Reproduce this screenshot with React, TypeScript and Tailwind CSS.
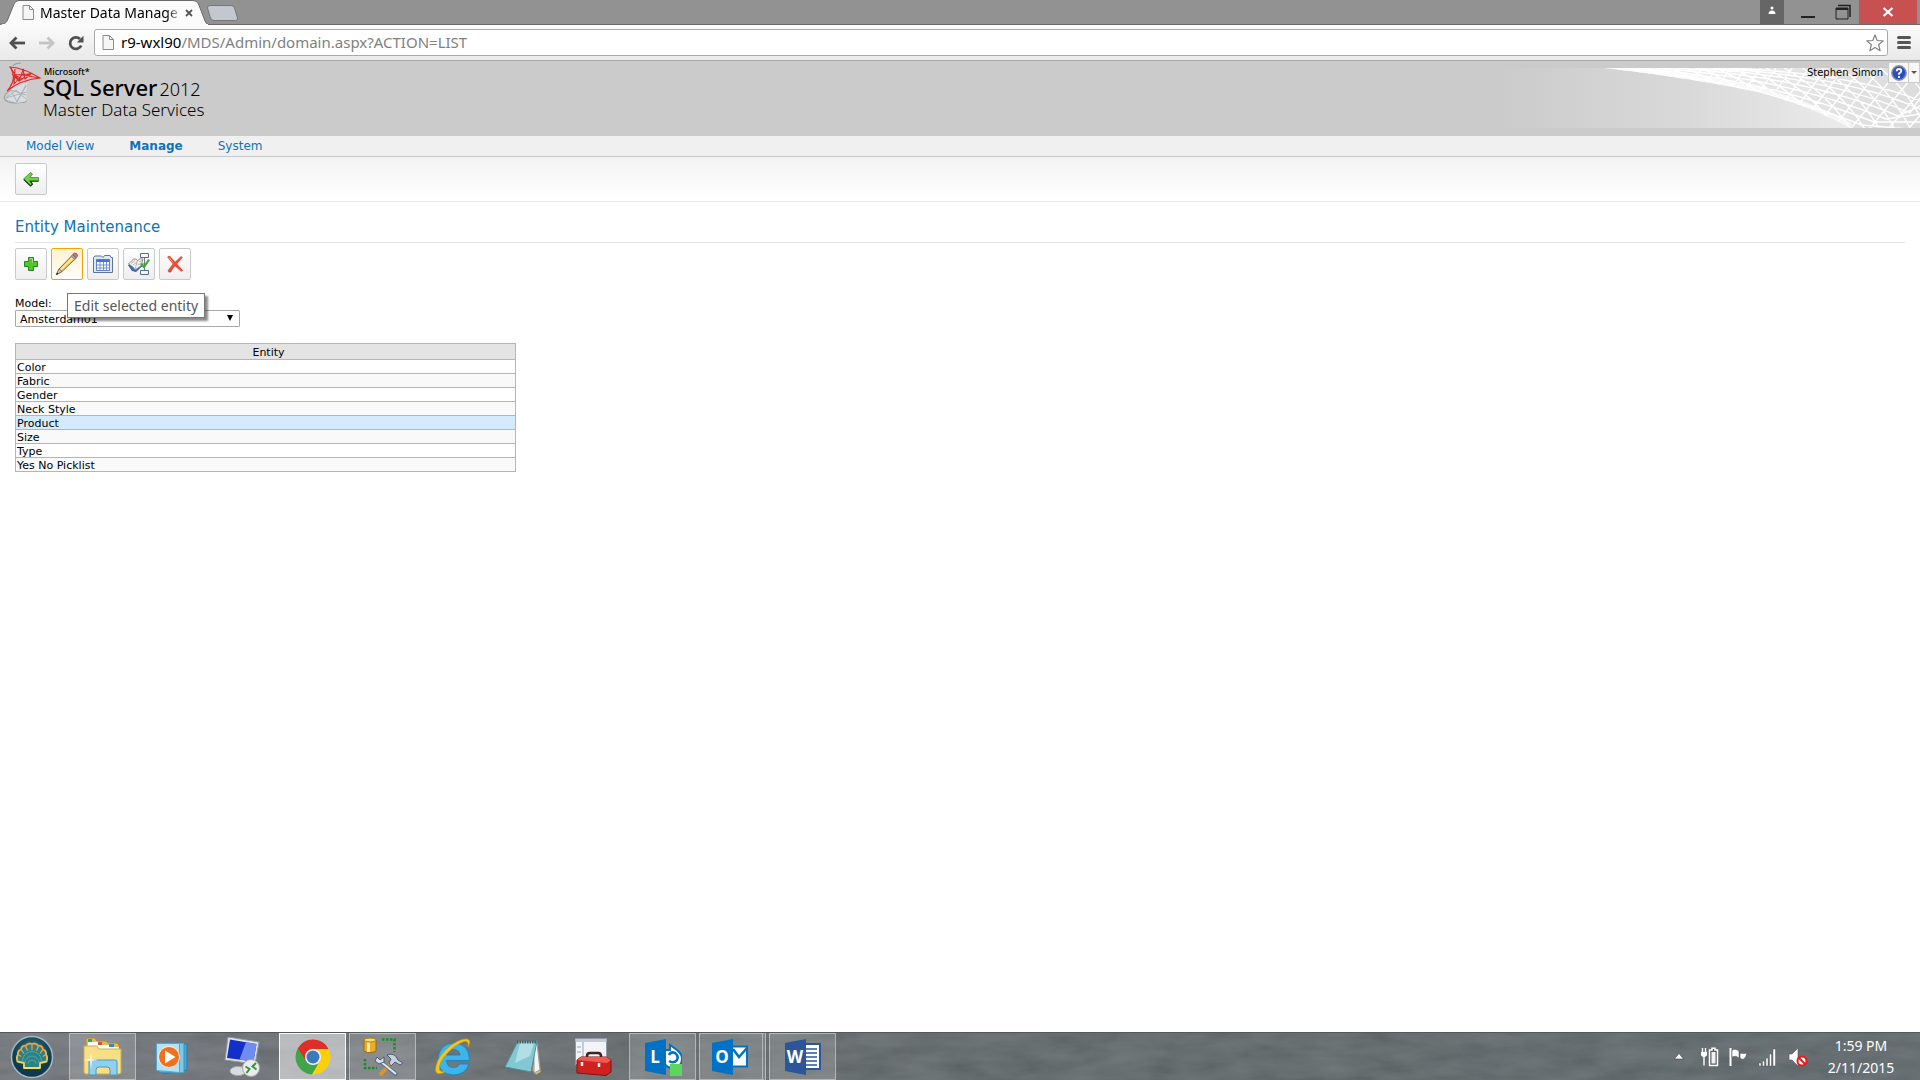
import React from 'react';
import { HiUser } from 'react-icons/hi';

const NAV = [
  { name: 'Model View', active: false },
  { name: 'Manage', active: true },
  { name: 'System', active: false },
];

const ENTITIES = [
  'Color',
  'Fabric',
  'Gender',
  'Neck Style',
  'Product',
  'Size',
  'Type',
  'Yes No Picklist',
];

/* ---------- browser icons ---------- */

function PageIcon({ className }: { className?: string }) {
  return (
    <svg viewBox="0 0 12 15" className={className}>
      <path d="M1 .5h6.5l4 4v10H1z" fill="#f6f6f6" stroke="#8c8c8c" />
      <path d="M7.5.5v4h4" fill="none" stroke="#8c8c8c" />
    </svg>
  );
}

function NavArrow({ color, flip }: { color: string; flip?: boolean }) {
  return (
    <svg viewBox="0 0 16 14" className="w-4 h-[14px]">
      <g transform={flip ? 'translate(16 0) scale(-1 1)' : undefined} fill="none" stroke={color} strokeWidth="2.8">
        <path d="M7.5 1.5 2 7l5.5 5.5" />
        <path d="M2 7h14" />
      </g>
    </svg>
  );
}

function ReloadIcon() {
  return (
    <svg viewBox="0 0 16 16" className="w-4 h-4">
      <path d="M13.2 10.500A5.800 5.800 0 1 1 12 4" fill="none" stroke="#505050" strokeWidth="2.8" />
      <path d="M15.5.8V7.500H8.800z" fill="#505050" />
    </svg>
  );
}

function BrowserTabs() {
  return (
    <div className="flex h-[25px] bg-[#929292] border-b border-[#6a6a6a] justify-between">
      <div className="flex">
        <div className="relative w-[210px] h-[25px]">
          <svg viewBox="0 0 210 25" className="absolute inset-0 w-[210px] h-[25px]">
            <path d="M0 25V24c5 0 6-1 7.500-4L14 4q1.500-3.500 5-3.500h174q4 0 5.500 3.500l6.500 17q1.500 4 5 4z" fill="#fbfbfb" stroke="#6a6a6a" />
            <path d="M2 25h206" stroke="#fbfbfb" strokeWidth="2" />
          </svg>
          <div className="relative flex items-center h-[25px] pl-[22px]">
            <PageIcon className="w-3 h-[15px] shrink-0" />
            <span className="ml-1.5 w-[139px] whitespace-nowrap text-[14px] bg-linear-to-r from-black from-90% to-[#ccc] bg-clip-text text-transparent">
              Master Data Manage
            </span>
            <button aria-label="Close tab" className="ml-1.5">
              <svg viewBox="0 0 8 8" className="w-2 h-2">
                <path d="M1 1l6 6M7 1 1 7" stroke="#555" strokeWidth="1.800" />
              </svg>
            </button>
          </div>
        </div>
        <button aria-label="New tab" className="self-start mt-[5px] -ml-1">
          <svg viewBox="0 0 32 16" className="w-8 h-4">
            <path d="M1.500 3Q1 .5 4 .5h21q2.500 0 3.500 2.500l3 10q.5 2.500-2 2.500H8q-2.500 0-3.500-2.500z" fill="#c3c8d0" stroke="#777" />
          </svg>
        </button>
      </div>
      <div className="flex h-6">
        <button aria-label="Profile" className="w-6 bg-[#666] flex items-center justify-center pb-1">
          <HiUser className="w-[10px] h-[10px] text-white" />
        </button>
        <button aria-label="Minimize" className="w-12 flex items-end justify-center pb-1.5">
          <span className="w-[14px] h-0.5 bg-[#222]" />
        </button>
        <button aria-label="Restore" className="w-[27px] flex items-center justify-start pl-[3px]">
          <svg viewBox="0 0 16 16" className="w-4 h-4">
            <path d="M1 4h12v11H1z" fill="none" stroke="#222" />
            <path d="M1 5h12" stroke="#222" strokeWidth="2" />
            <path d="M3 1.500h12V13" fill="none" stroke="#222" strokeWidth="1.500" />
          </svg>
        </button>
        <button aria-label="Close" className="w-[58px] bg-[#c75050] flex items-center justify-center mr-[3px]">
          <svg viewBox="0 0 12 10" className="w-3 h-[10px]">
            <path d="M1.500 1l9 8M10.500 1l-9 8" stroke="#fff" strokeWidth="2.200" />
          </svg>
        </button>
      </div>
    </div>
  );
}

function AddressBar() {
  return (
    <div className="flex items-center h-9 bg-linear-to-b from-[#fbfbfb] to-[#e9e9e9] border-b border-[#a8a8a8] pl-[9px]">
      <button aria-label="Back"><NavArrow color="#505050" /></button>
      <button aria-label="Forward" className="ml-[14px]"><NavArrow color="#c4c4c4" flip /></button>
      <button aria-label="Reload" className="ml-[13px]"><ReloadIcon /></button>
      <div className="ml-[10px] flex flex-1 items-center h-[27px] bg-white border border-[#a9a9a9] rounded-[3px] pl-[7px] pr-[3px]">
        <PageIcon className="w-3 h-[15px] shrink-0" />
        <div className="ml-[7px] pb-0.5 flex-1 text-[15px] leading-5 whitespace-nowrap text-[#808080]">
          <span className="text-black">r9-wxl90</span>/MDS/Admin/domain.aspx?ACTION=LIST
        </div>
        <button aria-label="Bookmark">
          <svg viewBox="0 0 18 18" className="w-[18px] h-[18px]">
            <path d="M9 1l2.200 5.500 6 .4-4.600 3.800 1.500 6L9 13.500l-5.100 3.200 1.500-6L.8 6.900l6-.4z" fill="#fff" stroke="#808080" strokeWidth="1.200" strokeLinejoin="round" />
          </svg>
        </button>
      </div>
      <button aria-label="Menu" className="mx-[9px] flex flex-col gap-0.5">
        <span className="w-[14px] h-[3px] rounded-sm bg-[#555]" />
        <span className="w-[14px] h-[3px] rounded-sm bg-[#555]" />
        <span className="w-[14px] h-[3px] rounded-sm bg-[#555]" />
      </button>
    </div>
  );
}

/* ---------- page header ---------- */

function SqlMark() {
  return (
    <svg viewBox="0 0 40 42" className="w-10 h-[42px]">
      <path d="M10 4q2-3 8-3M8 28Q2 31 1 36q2 5 12 5l10-1M24 17q-5 8-1 23" fill="none" stroke="#9aa0a8" strokeWidth="1.200" />
      <path d="M9 27 24 20l-1 19-9 2-11-4z" fill="#d9dce0" />
      <path d="M8 28l6 12 9-17M3 36l10-8 10 9M8 28l15 5M3 36l20-6M13 41l10-17" fill="none" stroke="#a5abb3" strokeWidth=".8" />
      <path d="M7 5q14 1 30 11-20 2-33 13 11-12 3-24z" fill="#eebcbc" />
      <path d="M7 5q14 1 30 11-20 2-33 13 11-12 3-24z M8 6l8 13 4-11 2 9 6-5-17 1 9 4M9 12l7 7M12 7l-1 15 8-9 18 3M28 11l-12 8M7 25l6-12" fill="none" stroke="#dd2a2c" strokeWidth="1.100" />
    </svg>
  );
}

/* Mesh that fades in on the right end of the banner */
function BannerMesh() {
  const lines: string[] = [];
  // diagonals get steeper and further apart towards the right edge
  for (let i = 0; i < 26; i++) {
    const x = 60 + i * 10 + i * i * 0.25;
    const lean = 130 - i * 4;
    lines.push(`M${x} 0Q${x + lean * 0.6} 22 ${x + lean} 60`);
    lines.push(`M${x + 60} 0L${x + 30 - i} 60`);
  }
  for (let i = 1; i < 8; i++) {
    lines.push(`M${105 + i * 18} 0Q${230 + i * 20} ${14 - i} ${350 + i * 12} ${60 - i * 3}L420 ${70 - i * 8}`);
  }
  return (
    <svg viewBox="0 0 420 60" className="w-[420px] h-[60px]">
      <defs>
        <linearGradient id="banner" x1="0" x2="1">
          <stop offset="0" stopColor="#cbcbcb" />
          <stop offset=".45" stopColor="#d9d9d9" />
          <stop offset=".85" stopColor="#ececec" />
        </linearGradient>
        <linearGradient id="edge" x1="0" x2="1">
          <stop offset="0" stopColor="#f2f2f2" />
          <stop offset="1" stopColor="#dcdcdc" />
        </linearGradient>
        <clipPath id="sweep">
          <path d="M105 0Q185 9 258 24 310 38 350 60H420V0z" />
        </clipPath>
      </defs>
      <path d="M0 0h420v60H0z" fill="url(#banner)" />
      <g clipPath="url(#sweep)">
        <path d="M100 0h320v60H100z" fill="url(#edge)" />
        <path d={lines.join('')} fill="none" stroke="#fff" strokeWidth="1.400" />
        <path d="M105 0Q185 9 258 24 310 38 350 60" fill="none" stroke="#fff" strokeWidth="10" opacity=".7" />
      </g>
    </svg>
  );
}

function Banner() {
  return (
    <header className="flex justify-between h-[75px] bg-[#cbcbcb]">
      <div className="flex pl-[3px] pt-px">
        <SqlMark />
        <div className="text-black">
          <div className="text-[9px] leading-[10px] mt-[5px] ml-px font-medium">Microsoft*</div>
          <div className="flex items-baseline whitespace-nowrap">
            <span className="text-[22px] leading-5 font-medium">SQL Server</span>
            <span className="text-[18px] leading-5 font-light ml-0.5">2012</span>
          </div>
          <div className="text-[17px] leading-[22px] font-light whitespace-nowrap">Master Data Services</div>
        </div>
      </div>
      <div className="relative pt-[7px]">
        <BannerMesh />
        <div className="absolute top-px right-0 flex items-center font-['DejaVu_Sans',sans-serif] text-[10px] text-black">
          <span className="mr-[5px]">Stephen Simon</span>
          <button aria-label="Help" className="w-[21px] h-[21px] bg-[#f8f8f8] border border-[#ccc] flex items-center justify-center">
            <svg viewBox="0 0 16 16" className="w-4 h-4">
              <circle cx="8" cy="8" r="7.200" fill="#2a50c0" stroke="#8c95a8" strokeWidth="1.500" />
              <path d="M5.700 6.200Q5.700 4 8 4t2.300 2Q10.300 7.300 8 8.500v1.300M8 11v2" fill="none" stroke="#fff" strokeWidth="1.800" />
            </svg>
          </button>
          <button aria-label="Help options" className="w-[11px] h-[21px] bg-[#f8f8f8] border border-l-0 border-[#ccc] flex items-center justify-center">
            <span className="border-x-[3px] border-x-transparent border-t-[3px] border-t-[#555]" />
          </button>
        </div>
      </div>
    </header>
  );
}

/* ---------- toolbar ---------- */

function ToolButton({ label, active, children }: { label: string; active?: boolean; children: React.ReactNode }) {
  return (
    <button
      aria-label={label}
      className={`w-8 h-8 border rounded-[2px] flex items-center justify-center ${
        active ? 'border-[#f0a30a] bg-linear-to-b from-[#fff3d0] to-[#fffdf8]' : 'border-[#c9c9c9] bg-linear-to-b from-white to-[#eee]'
      }`}>
      {children}
    </button>
  );
}

const BackIcon = () => (
  <svg viewBox="0 0 16 16" className="w-4 h-4">
    <path d="M.5 8 7.500 1.500l2 1.500-2.500 3.500h8.500V10H7l2.500 3-1.500 2z" fill="#6fd048" stroke="#3c7a28" strokeWidth=".7" />
    <path d="M.8 8.500 7.500 15l2-1.800L7.300 10.200h8.200" fill="none" stroke="#1c3814" strokeWidth="1.100" />
  </svg>
);

const AddIcon = () => (
  <svg viewBox="0 0 16 16" className="w-4 h-4">
    <path d="M5.500 1.500h5v4h4v5h-4v4h-5v-4h-4v-5h4z" fill="#55c52c" stroke="#22851a" strokeLinejoin="round" />
    <path d="M6.500 2.500h3v4" fill="none" stroke="#a5e486" />
  </svg>
);

const PencilIcon = () => (
  <svg viewBox="0 0 24 24" className="w-6 h-6">
    <path d="M1.500 22.500 4 17 17.500 3l3.500 3.200L7 19.500z" fill="#f3cb63" stroke="#7b5a2c" strokeWidth=".9" />
    <path d="M6 17.500 19 4.500" stroke="#fff0ae" strokeWidth="1.200" />
    <path d="M1.500 22.500 4 17l3 2.500z" fill="#ead0b0" stroke="#6a4b33" strokeWidth=".7" />
    <path d="M1 23l1-2.500L3.500 22z" fill="#333" />
    <path d="M16.200 4.200l3.500 3.300 1.500-1.500-3.500-3.300z" fill="#9ba6b5" stroke="#66707c" strokeWidth=".6" />
    <path d="M17.800 2.400 19.300 1q3-.3 3.300 2.800L21.300 5.800z" fill="#d8707a" stroke="#8f3b48" strokeWidth=".7" />
  </svg>
);

const EntityIcon = () => (
  <svg viewBox="0 0 22 20" className="w-[22px] h-5">
    <path d="M1.500 3.500 3 2h6.500L11 3.500 12.500 1.500H18L19 3.500h1.500v15h-19z" fill="#dde6f2" stroke="#5f7597" />
    <path d="M4.500 5.500h13v11h-13z" fill="#fff" stroke="#3c66b0" strokeWidth=".8" />
    <path d="M4.500 5.500h13v2.500h-13z" fill="#3e75d6" />
    <path d="M4.500 11h13M4.500 14h13M8 8v8.500M11.500 8v8.500M14.500 8v8.500" stroke="#6f94d2" />
  </svg>
);

const HierarchyIcon = () => (
  <svg viewBox="0 0 24 24" className="w-6 h-6">
    <path d="M17.500 5v15M14 12h3.500" stroke="#777" />
    <path d="M13.500 1.500h8v4h-8zM13.500 18.500h8v4h-8z" fill="#f6f9ff" stroke="#526c9d" />
    <path d="M1.500 13 5 18.500l4 1 7-6.500-8-2z" fill="#3f6ec2" stroke="#294c8c" strokeWidth=".8" />
    <path d="M1.500 12 6.500 7q3-.5 4 1.500Q12.500 6 16 7l-2 7-6 4q-1-3-6.500-6z" fill="#f4f4ee" stroke="#777" strokeWidth=".8" />
    <path d="M10.500 8.500 8 17.500M4 11.500l4-3M6 13l4-3M12 10l3-1.500M11 13l3.500-2" stroke="#999" strokeWidth=".7" />
    <path d="M14 12l3 3 5-7.500" fill="none" stroke="#3aa83a" strokeWidth="2.200" />
  </svg>
);

const DeleteIcon = () => (
  <svg viewBox="0 0 18 18" className="w-[18px] h-[18px]">
    <path d="M1.500 2Q3.500 0 5 2.500L9.200 7 15 1.500l1.500.8L10.800 9l6 6.500-1.500 1L9 11q-3 3-4 6-3 1-3-1.500L7 9z" fill="#ef4a32" stroke="#c9301f" strokeWidth=".4" />
    <path d="M3 2.500l4 5" stroke="#ff9c85" />
  </svg>
);

/* ---------- taskbar icons ---------- */

const StartIcon = () => (
  <svg viewBox="0 0 44 44" className="w-11 h-11">
    <defs>
      <radialGradient id="start" cx=".5" cy=".35">
        <stop offset="0" stopColor="#2f7783" />
        <stop offset="1" stopColor="#10394d" />
      </radialGradient>
      <linearGradient id="shell" x1="0" x2="0" y1="0" y2="1">
        <stop offset="0" stopColor="#f59a3c" />
        <stop offset="1" stopColor="#f6e04e" />
      </linearGradient>
    </defs>
    <circle cx="22" cy="22" r="20.500" fill="url(#start)" stroke="#a4bcc6" strokeWidth="1.500" />
    <path
      d="M14 33h16v-5l6.500-1.500Q38 22 36 19.500q.5-4-3-5-.5-4-4.500-3.800Q26 7.500 22 9q-4-1.500-6.500 1.700-4-.2-4.500 3.800-3.500 1-3 5-2 2.500-.5 7L14 28z"
      fill="#2c8288" stroke="url(#shell)" strokeWidth="1.800" strokeLinejoin="round" />
    <path d="M8 19.500l3 2M11 14.500l3 4M15.500 10.700l2 5M22 9v6M28.500 10.700l-2 5M33 14.500l-3 4M36 19.500l-3 2" stroke="#f0a245" strokeWidth="1.200" />
    <g fill="none" stroke="#66b3b0" strokeWidth=".7">
      <path d="M18 29a4 4 0 0 1 8 0M15 28a7 7 0 0 1 14 0M12.500 26a9.500 9.500 0 0 1 19 0" />
    </g>
  </svg>
);

const ExplorerIcon = () => (
  <svg viewBox="0 0 40 40" className="w-10 h-10">
    <path d="M3 3q0-2 2-2h7l2 3h9l2 2h9l2 2v5H3z" fill="#e2bd57" stroke="#af893a" />
    <path d="M5 5h12v7H5zM15 8h12v6H15zM25 10h11v4H25z" fill="#fff" />
    <path d="M5 2h4v3H5z" fill="#35a854" /><path d="M15 5h4v3h-4z" fill="#e14b3c" /><path d="M26 7h5v3h-5z" fill="#2e86d8" />
    <path d="M1 9h13l2 3h22v23q0 2-2 2H3q-2 0-2-2z" fill="#f7df86" stroke="#cfad4c" />
    <path d="M6 38V25q0-2 2-2h24q2 0 2 2v13h-7v-5q0-3-3-3h-8q-3 0-3 3v5z" fill="#8fd0ee" stroke="#4798c8" />
    <path d="M8 15l1 7 7 1-7 1-1 8-1-8-7-1 7-1z" fill="#fff" opacity=".8" />
  </svg>
);

const MediaIcon = () => (
  <svg viewBox="0 0 36 36" className="w-9 h-9">
    <path d="M8 5h24v26L8 35z" fill="#4aa5cf" stroke="#2e7da6" />
    <path d="M4 4h25v30L4 33z" fill="#7cc9ea" stroke="#3e92bc" />
    <path d="M1.500 4.500h23v29l-23-2z" fill="#b6e0f3" stroke="#58a6ca" />
    <circle cx="14" cy="18" r="10.500" fill="#f0701c" stroke="#fff" strokeWidth=".8" />
    <path d="M10 11.500 20.500 18 10 24.500z" fill="#fff" />
  </svg>
);

const RemoteIcon = () => (
  <svg viewBox="0 0 40 40" className="w-10 h-10">
    <ellipse cx="15" cy="34" rx="8" ry="4.500" fill="#d9dde1" stroke="#a4a8ac" />
    <path d="M5 0l31 5-4 22-30-4z" fill="#dfe4ea" stroke="#9298a0" />
    <path d="M7 2.500 33.500 7 30.500 24.500 4 21z" fill="#1230c8" />
    <path d="M23 5 33.500 7 30.500 24.500l-14-2z" fill="#6f8cf0" />
    <circle cx="28" cy="31" r="8.500" fill="#ececec" stroke="#a5a5a5" />
    <path d="M22.500 29.500l4 2.500-3 4M33 26l-3.500 3.500 4 3" fill="none" stroke="#2d9c3c" strokeWidth="2" />
  </svg>
);

const ChromeIcon = () => (
  <svg viewBox="0 0 36 36" className="w-9 h-9">
    <path d="M18 18 2.840 9.250A17.500 17.500 0 0 0 17 35.500l6-9.500z" fill="#3fa548" />
    <path d="M18 10h15.500A17.500 17.500 0 0 1 17 35.500L25 22z" fill="#fbd008" />
    <path d="M2.840 9.250A17.500 17.500 0 0 1 33.500 10H18l-7 12z" fill="#db2f28" />
    <circle cx="18" cy="18" r="8" fill="#f2f2f2" />
    <circle cx="18" cy="18" r="6.500" fill="#3979bd" />
  </svg>
);

const StudioIcon = () => (
  <svg viewBox="0 0 40 40" className="w-10 h-10">
    <path d="M1 3v11q6 3.500 12 0V3z" fill="#e9ad2b" stroke="#9a6c12" />
    <path d="M4 4v11h3V4z" fill="#fde79a" />
    <ellipse cx="7" cy="3" rx="6" ry="2" fill="#fbd975" stroke="#a97d1b" />
    <path d="M19 2.500h12.500V15M2 22v9h12" fill="none" stroke="#1f8a28" strokeWidth="2.500" strokeDasharray="2.500 1.500" />
    <path d="M17 38 28 26" stroke="#d8952a" strokeWidth="4" />
    <path d="M17 24l17 14" stroke="#5c6f86" strokeWidth="4" />
    <path d="M17 24l16 13" stroke="#dfe7f0" strokeWidth="2" />
    <path d="M24 18q8-3 11 5l5 3-3 2-5-3-4 4-2-3 2-4z" fill="#c3d0de" stroke="#4d5d70" />
    <path d="M14 20l3 3 4-3v5l-5 2-4-3z" fill="#d5dfea" stroke="#4d5d70" />
  </svg>
);

const ExplorerEIcon = () => (
  <svg viewBox="0 0 40 40" className="w-10 h-10">
    <path d="M36.500 23.500H13.500q.5 7 7 7 4.500 0 6-3.500h9.500q-3.500 11-16 11-15-1-15-16Q6 7 20.500 6q16 .5 16 17.500zM13.800 18h13.400q-.8-5.500-6.700-5.500T13.800 18z" fill="#3db5ea" stroke="#167fb9" strokeWidth=".8" />
    <path d="M35 10q4-7-1-8-6-1-17 7Q5 19 3 29q-2 9 5 7.500 2-.5 5-2.500-5 1.500-6.500-1Q5 26 14 16.500T31 4.500q5-1 4 5.500z" fill="#f6c61f" stroke="#c8960e" strokeWidth=".6" />
  </svg>
);

const NotepadIcon = () => (
  <svg viewBox="0 0 38 38" className="w-[38px] h-[38px]">
    <path d="M33 5l4 29-5 3-4-5z" fill="#d4c08c" stroke="#8a7c58" />
    <path d="M30 5h3l3 27-6 3z" fill="#f4f4f4" stroke="#999" />
    <path d="M14 3h19l-6 31L1 29z" fill="#83c8d0" stroke="#4a8f9b" />
    <path d="M16 5h14l-4 13-15 7z" fill="#c4e9ec" opacity=".7" />
    <path d="M13 4h20" stroke="#555" strokeWidth="3" strokeDasharray="1.500 1" />
  </svg>
);

const ToolboxIcon = () => (
  <svg viewBox="0 0 38 38" className="w-[38px] h-[38px]">
    <path d="M1.500.5h31v26h-31z" fill="#f2f4f7" stroke="#8e97a3" />
    <path d="M1.500 1h31v3h-31z" fill="#c2cbd6" />
    <path d="M9 4v22M3 9h4M3 14h4" stroke="#97a3b2" />
    <path d="M13 21v-3q0-3 3-3h8q3 0 3 3v3" fill="none" stroke="#3d2323" strokeWidth="2.500" />
    <path d="M3 22l4-3h25l5 3v12l-5 3.500L3 35z" fill="#cf2220" stroke="#851010" />
    <path d="M3 22l4-3h25l5 3-4 3z" fill="#ef5a50" />
    <path d="M8 24v4M25 25v4" stroke="#eee" strokeWidth="2.500" />
  </svg>
);

function OfficeIcon({ letter, color, children }: { letter: string; color: string; children: React.ReactNode }) {
  return (
    <svg viewBox="0 0 38 38" className="w-[38px] h-[38px]">
      {children}
      <path d="M1 5 22 1v36L1 33z" fill={color} />
      <text x="11" y="25" textAnchor="middle" fill="#fff" fontSize="17" fontWeight="700" fontFamily="Open Sans, sans-serif">
        {letter}
      </text>
    </svg>
  );
}

const LyncIcon = () => (
  <OfficeIcon letter="L" color="#0072c6">
    <path d="M21 12h5V7l7 5q5 4 5 9 0 8-9 9-6 0-8-4z" fill="#fff" stroke="#0072c6" strokeWidth="2" />
    <path d="M25 17q2-4 6-2 4 3 2 7-3 4-8 1" fill="none" stroke="#0072c6" strokeWidth="2.500" />
    <path d="M26 26h12v12H26z" fill="#5bd75b" />
  </OfficeIcon>
);

const OutlookIcon = () => (
  <OfficeIcon letter="O" color="#0072c6">
    <path d="M20 8.500h16v20H20z" fill="#fff" stroke="#0072c6" strokeWidth="2" />
    <path d="M22 11l6 8L36 10" fill="none" stroke="#0072c6" strokeWidth="2.500" />
  </OfficeIcon>
);

const WordIcon = () => (
  <OfficeIcon letter="W" color="#2b579a">
    <path d="M20 6h16v25H20z" fill="#fff" stroke="#2b579a" strokeWidth="2" />
    <path d="M22 11h11M22 15h11M22 19h11M22 23h11M22 27h11" stroke="#2b579a" strokeWidth="1.500" />
  </OfficeIcon>
);

const TASKS = [
  { name: 'File Explorer', Icon: ExplorerIcon, state: 'open' },
  { name: 'Media Player', Icon: MediaIcon, state: 'pinned' },
  { name: 'Remote Desktop', Icon: RemoteIcon, state: 'pinned' },
  { name: 'Chrome', Icon: ChromeIcon, state: 'focused' },
  { name: 'Management Studio', Icon: StudioIcon, state: 'open' },
  { name: 'Internet Explorer', Icon: ExplorerEIcon, state: 'pinned' },
  { name: 'Notepad', Icon: NotepadIcon, state: 'pinned' },
  { name: 'Toolbox', Icon: ToolboxIcon, state: 'pinned' },
  { name: 'Lync', Icon: LyncIcon, state: 'open' },
  { name: 'Outlook', Icon: OutlookIcon, state: 'stacked' },
  { name: 'Word', Icon: WordIcon, state: 'open' },
];

const TASK_STYLES: Record<string, string> = {
  pinned: 'border-transparent',
  open: 'border-white/40 bg-white/15',
  stacked: 'border-white/40 bg-white/15 border-r-4 border-double pr-[3px]',
  focused: 'border-white/90 bg-white/50',
};

function TrayIcons() {
  return (
    <div className="flex items-center gap-2">
      <button aria-label="Show hidden icons" className="mr-2">
        <svg viewBox="0 0 10 7" className="w-[10px] h-[7px]"><path d="M5 .5l4.500 5.500H.5z" fill="#fff" stroke="#444" strokeWidth=".6" /></svg>
      </button>
      <svg viewBox="0 0 20 20" className="w-5 h-5">
        <path d="M9.500 3h2.500V1.200h3V3h2.500v15.500h-8z" fill="#5a5f61" stroke="#fff" strokeWidth="1.500" />
        <path d="M11.500 5h4v11.500h-4z" fill="#f2f2f2" />
        <path d="M2.500 1v4M5.500 1v4M4 9v9.500" stroke="#fff" strokeWidth="1.400" />
        <path d="M1 5h6v3.500L5 10H3L1 8.500z" fill="#fff" />
      </svg>
      <svg viewBox="0 0 20 20" className="w-5 h-5">
        <path d="M2.500 1v18" stroke="#fff" strokeWidth="2" />
        <path d="M4 3q4-2 7 1v7q-3-3-7-1zM12 6q3 1 7 0-1 4-3 6-2 1-4-1z" fill="#fff" stroke="#444" strokeWidth=".5" />
      </svg>
      <svg viewBox="0 0 20 20" className="w-5 h-5 ml-0.5">
        <path d="M1 16h2v3H1zM4.500 14h2v5h-2zM8 11h2v8H8zM11.500 7h2v12h-2zM15 2h2.500v17H15z" fill="#fff" stroke="#444" strokeWidth=".4" />
      </svg>
      <svg viewBox="0 0 20 20" className="w-5 h-5 ml-0.5">
        <path d="M1 7h3l6-6v18l-6-6H1z" fill="#fff" stroke="#555" strokeWidth=".6" />
        <circle cx="14" cy="14" r="4.500" fill="#fff" stroke="#e81c1c" strokeWidth="2" />
        <path d="M11 11l6 6" stroke="#e81c1c" strokeWidth="2" />
      </svg>
    </div>
  );
}

/* Water of the desktop wallpaper showing through the bar */
function WaterTexture() {
  return (
    <svg className="absolute inset-0 w-full h-full opacity-15">
      <filter id="water">
        <feTurbulence type="fractalNoise" baseFrequency="0.02 0.07" numOctaves="5" seed="8" />
        <feColorMatrix values="1 0 0 0 0 1 0 0 0 0 1 0 0 0 0 0 0 0 0 1" />
      </filter>
      <rect width="100%" height="100%" filter="url(#water)" />
    </svg>
  );
}

function Taskbar() {
  return (
    <footer className="relative h-12 bg-linear-to-r from-[#6c7076] via-[#596163] to-[#576165] border-t border-[#53585a] text-white">
      <WaterTexture />
      <div className="relative flex items-center justify-between h-[47px]">
        <div className="flex items-center">
          <button aria-label="Start" className="w-[69px] pl-[10px]"><StartIcon /></button>
          <div className="flex gap-[3px]">
            {TASKS.map(({ name, Icon, state }) => (
              <button key={name} aria-label={name} className={`w-[67px] h-[47px] border flex items-center justify-center ${TASK_STYLES[state]}`}>
                <Icon />
              </button>
            ))}
          </div>
        </div>
        <div className="flex items-center pr-[24px]">
          <TrayIcons />
          <div className="ml-[18px] w-[70px] text-center text-[14px] leading-[22px] whitespace-nowrap">
            <div>1:59 PM</div>
            <div>2/11/2015</div>
          </div>
        </div>
      </div>
    </footer>
  );
}

export default function App() {
  return (
    <div className="min-h-screen flex flex-col bg-white font-['Noto_Sans','Open_Sans',sans-serif]">
      <BrowserTabs />
      <AddressBar />
      <Banner />

      <nav className="flex items-center gap-[35px] h-[21px] pl-[26px] bg-[#f0f0f0] border-b border-[#c8c8c8] font-['DejaVu_Sans',sans-serif] text-[12px] text-[#1072b8]">
        {NAV.map((item) => (
          <a key={item.name} href="#" className={item.active ? 'font-bold' : ''}>
            {item.name}
          </a>
        ))}
      </nav>

      <div className="px-[15px] pt-1.5 pb-1.5 bg-linear-to-b from-[#f3f3f3] to-white border-b border-[#e8e8e8]">
        <ToolButton label="Back"><BackIcon /></ToolButton>
      </div>

      <main className="flex-1 px-[15px] pt-[15px] font-['DejaVu_Sans',sans-serif] text-[11px] text-black">
        <h1 className="pb-[5px] text-[15px] leading-5 text-[#1072b8] border-b border-[#e4e4e4]">Entity Maintenance</h1>

        <div className="flex gap-1 mt-[5px]">
          <ToolButton label="Add entity"><AddIcon /></ToolButton>
          <div className="relative">
            <ToolButton label="Edit selected entity" active><PencilIcon /></ToolButton>
            <div role="tooltip" className="absolute top-[45px] left-4 z-10 px-1.5 border border-[#767676] bg-white shadow-[3px_3px_2px_rgba(0,0,0,0.45)] font-['Noto_Sans','Open_Sans',sans-serif] text-[14px] leading-[23px] text-[#575757] whitespace-nowrap">
              Edit selected entity
            </div>
          </div>
          <ToolButton label="Entity attributes"><EntityIcon /></ToolButton>
          <ToolButton label="Hierarchies"><HierarchyIcon /></ToolButton>
          <ToolButton label="Delete entity"><DeleteIcon /></ToolButton>
        </div>

        <div className="flex flex-col items-start mt-[18px]">
          <label htmlFor="model" className="leading-[12px]">Model:</label>
          <div className="relative">
            <select id="model" className="block appearance-none w-[225px] h-[17px] pl-1 pt-px border border-[#a9a9a9] rounded-[1px] bg-white leading-[15px]">
              <option>Amsterdam01</option>
            </select>
            <span className="absolute right-[7px] top-[5px] pointer-events-none border-x-[3px] border-x-transparent border-t-[6px] border-t-black" />
          </div>
        </div>

        <table className="mt-4 w-[501px] border-collapse border border-[#b5b5b5] leading-[11px]">
          <thead>
            <tr>
              <th className="h-4 p-0 pt-0.5 pl-1.5 font-normal bg-[#e4e4e4] border border-[#b5b5b5]">Entity</th>
            </tr>
          </thead>
          <tbody>
            {ENTITIES.map((entity, i) => (
              <tr key={entity} className={entity === 'Product' ? 'bg-[#d3ebfd]' : i % 2 ? 'bg-[#f9f9f9]' : 'bg-white'}>
                <td className="p-0 pt-0.5 pl-px border border-[#b5b5b5]">{entity}</td>
              </tr>
            ))}
          </tbody>
        </table>
      </main>

      <Taskbar />
    </div>
  );
}
